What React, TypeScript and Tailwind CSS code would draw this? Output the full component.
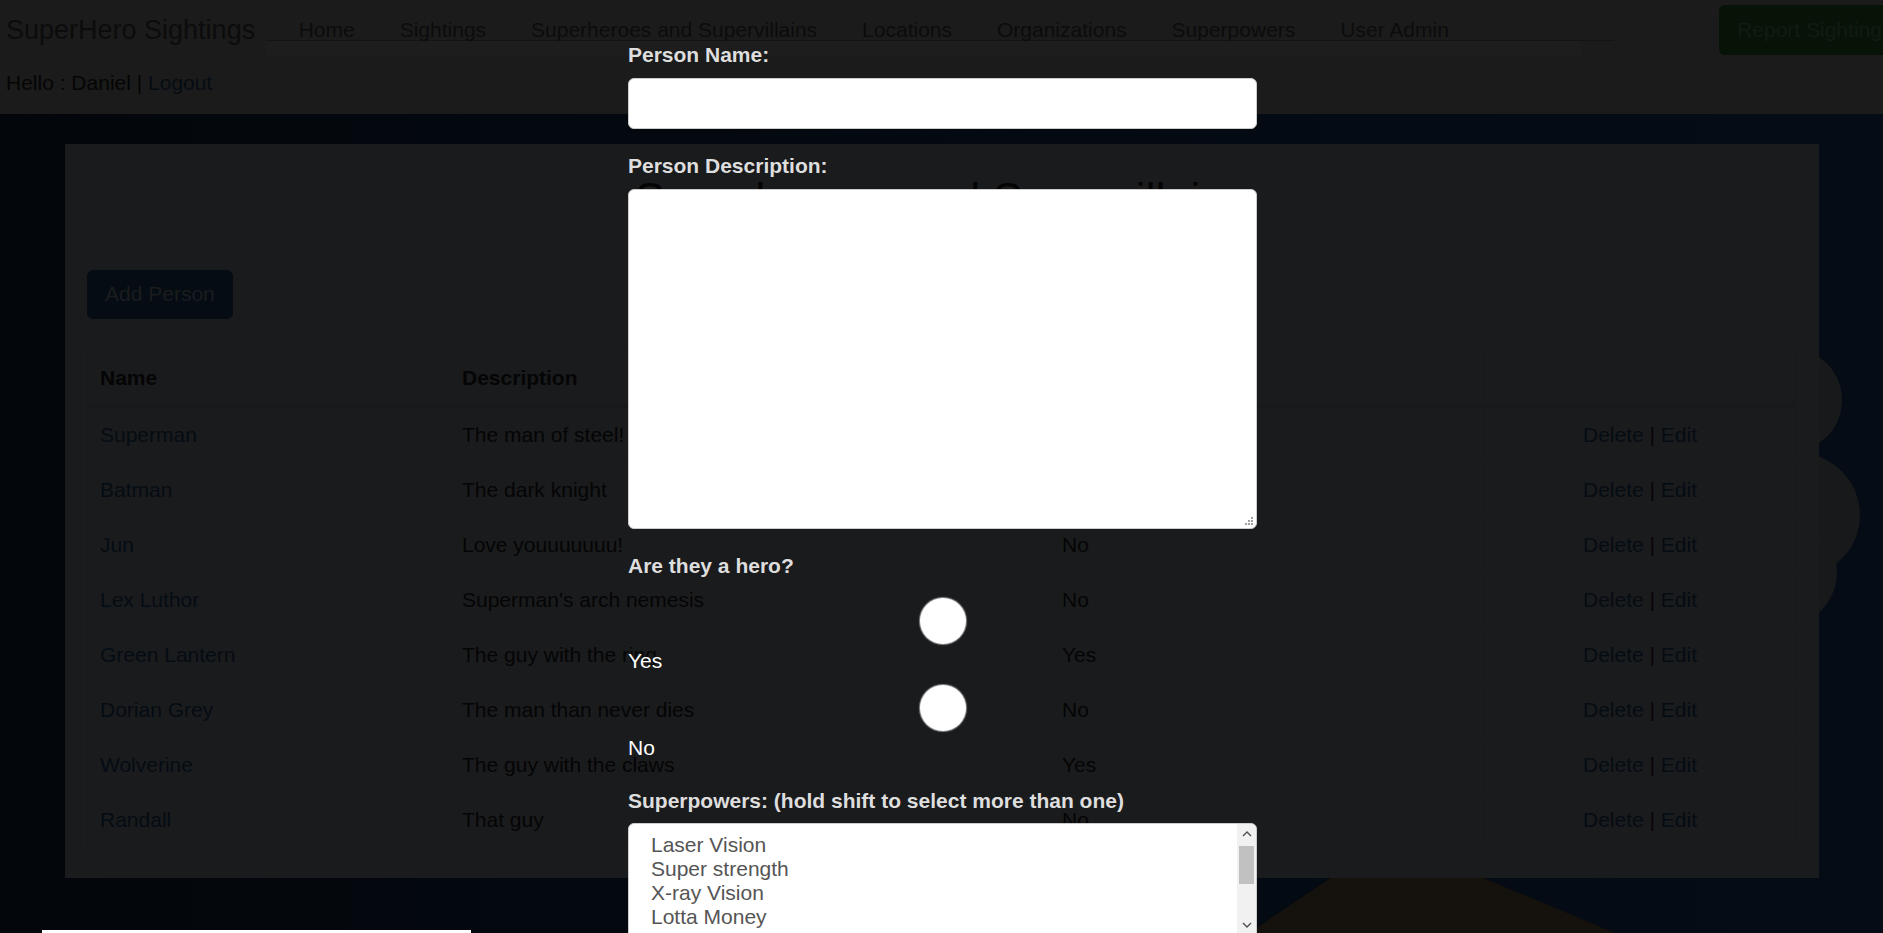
const navLinks = [
  "Home",
  "Sightings",
  "Superheroes and Supervillains",
  "Locations",
  "Organizations",
  "Superpowers",
  "User Admin",
];

const people = [
  { name: "Superman", description: "The man of steel!", hero: "Yes" },
  { name: "Batman", description: "The dark knight", hero: "Yes" },
  { name: "Jun", description: "Love youuuuuuu!", hero: "No" },
  { name: "Lex Luthor", description: "Superman's arch nemesis", hero: "No" },
  { name: "Green Lantern", description: "The guy with the ring", hero: "Yes" },
  { name: "Dorian Grey", description: "The man than never dies", hero: "No" },
  { name: "Wolverine", description: "The guy with the claws", hero: "Yes" },
  { name: "Randall", description: "That guy", hero: "No" },
];

const powers = ["Laser Vision", "Super strength", "X-ray Vision", "Lotta Money"];

function NightScene() {
  // the dimmed background picture behind the page
  return (
    <svg className="absolute inset-0 h-full w-full" viewBox="0 0 1883 933" preserveAspectRatio="none">
      <defs>
        <linearGradient id="sky" x1="0" y1="0" x2="1" y2="0">
          <stop offset="0" stopColor="#03070c" />
          <stop offset="1" stopColor="#050c16" />
        </linearGradient>
      </defs>
      <rect width="1883" height="933" fill="url(#sky)" />
      <g fill="#18191a">
        <circle cx="1790" cy="400" r="52" />
        <circle cx="1798" cy="515" r="62" />
        <circle cx="1782" cy="572" r="55" />
      </g>
      <polygon points="1357,860 1441,860 1615,933 1249,933" fill="#15110c" />
    </svg>
  );
}

function Header() {
  return (
    <header className="relative h-[114px] bg-[#1b1b1b]">
      <div className="flex h-[60px] items-start">
        <div className="ml-[6px] mt-[15px] text-[27px] leading-[30px] text-[#0c0c0c] whitespace-nowrap">
          SuperHero Sightings
        </div>
        <nav className="relative ml-[11px] h-[41px] w-[1348px] shrink-0 border-b border-[#141414]">
          <div className="absolute left-0 right-[33px] top-[41px] h-[15px] bg-[#1d1d1d]" />
          <ul className="flex pl-[10px] pt-[15px] leading-[30px] text-[#0c0c0c]">
            {navLinks.map((l) => (
              <li key={l} className="px-[22.5px] whitespace-nowrap">
                {l}
              </li>
            ))}
          </ul>
        </nav>
        <button className="ml-[105px] mt-[5px] h-[50px] shrink-0 rounded-[6px] bg-[#081308] px-[18px] text-[#131a13] whitespace-nowrap">
          Report Sighting
        </button>
      </div>
      <div className="ml-[6px] mt-[8px] text-[#050505]">
        Hello : Daniel | <span className="text-[#050c13]">Logout</span>
      </div>
    </header>
  );
}

function PeoplePanel() {
  const cell = "border border-[#18191b] px-[12px] py-[12px] align-top";
  return (
    <main className="relative mx-auto mt-[30px] w-[1754px] bg-[#1a1b1d] px-[22.5px] pb-[30px] pt-[30px]">
      <h2 className="text-center text-[45px] leading-[49.5px] text-[#040404]">Superheroes and Supervillains</h2>
      <button className="mt-[46px] h-[49px] rounded-[6px] bg-[#050c13] px-[18px] text-[#1b1c1e]">Add Person</button>
      <table className="mt-[31px] w-full table-fixed border-collapse text-[#050505]">
        <colgroup>
          <col className="w-[362px]" />
          <col className="w-[600px]" />
          <col className="w-[435px]" />
          <col />
        </colgroup>
        <thead>
          <tr>
            <th className={`${cell} border-b-[3px] text-left font-bold`}>Name</th>
            <th className={`${cell} border-b-[3px] text-left font-bold`}>Description</th>
            <th className={`${cell} border-b-[3px] text-left font-bold`}>Hero?</th>
            <th className={`${cell} border-b-[3px]`}></th>
          </tr>
        </thead>
        <tbody>
          {people.map((p) => (
            <tr key={p.name}>
              <td className={`${cell} text-left text-[#050c13]`}>{p.name}</td>
              <td className={`${cell} text-left`}>{p.description}</td>
              <td className={`${cell} text-left`}>{p.hero}</td>
              <td className={`${cell} text-center`}>
                <span className="text-[#050c13]">Delete</span> | <span className="text-[#050c13]">Edit</span>
              </td>
            </tr>
          ))}
        </tbody>
      </table>
    </main>
  );
}

function RadioDot({ top }: { top: string }) {
  return (
    <div className={`${top} flex h-[51px] items-center justify-center`}>
      <div className="h-[46px] w-[46px] rounded-full bg-white shadow-[0_0_1px_1px_rgba(255,255,255,0.5)]" />
    </div>
  );
}

function PersonForm() {
  const label = "mb-[7.5px] block font-bold text-[#dedede]";
  return (
    <form className="absolute left-[628px] top-[40px] w-[629px]">
      <div className="mb-[22.5px]">
        <label className={label}>Person Name:</label>
        <input className="block h-[51px] w-full rounded-[6px] border border-[#cccccc] bg-white px-[18px]" />
      </div>
      <div className="mb-[22.5px]">
        <label className={label}>Person Description:</label>
        <div className="relative">
          <textarea className="block h-[340px] w-full resize-none rounded-[6px] border border-[#cccccc] bg-white" />
          {/* resize grip */}
          <svg className="absolute bottom-[3px] right-[3px]" width="10" height="10" viewBox="0 0 10 10" fill="#a0a0a0">
            <rect x="7" y="1" width="2" height="2" />
            <rect x="4" y="4" width="2" height="2" />
            <rect x="7" y="4" width="2" height="2" />
            <rect x="1" y="7" width="2" height="2" />
            <rect x="4" y="7" width="2" height="2" />
            <rect x="7" y="7" width="2" height="2" />
          </svg>
        </div>
      </div>
      <div className="mb-[22.5px]">
        <label className={label}>Are they a hero?</label>
        <RadioDot top="mt-[14px]" />
        <div className="text-white">Yes</div>
        <RadioDot top="mt-[6px]" />
        <div className="text-white">No</div>
      </div>
      <div>
        <label className={label}>Superpowers: (hold shift to select more than one)</label>
        <div className="relative h-[120px] w-full overflow-hidden rounded-t-[6px] border border-[#cccccc] bg-white">
          <ul className="pl-[22px] pt-[9px] text-[#555555] leading-[24px]">
            {powers.map((p) => (
              <li key={p}>{p}</li>
            ))}
          </ul>
          <div className="absolute bottom-0 right-0 top-0 w-[19px] bg-[#f1f1f1]">
            <div className="flex h-[18px] items-center justify-center text-[#505050]">
              <svg width="10" height="7" viewBox="0 0 10 7">
                <path d="M1 6 L5 2 L9 6" fill="none" stroke="currentColor" strokeWidth="1.4" />
              </svg>
            </div>
            <div className="mx-[2px] mt-[4px] h-[38px] bg-[#c1c1c1]" />
            <div className="absolute bottom-[8px] left-0 right-0 flex h-[18px] items-center justify-center text-[#505050]">
              <svg width="10" height="7" viewBox="0 0 10 7">
                <path d="M1 1 L5 5 L9 1" fill="none" stroke="currentColor" strokeWidth="1.4" />
              </svg>
            </div>
          </div>
        </div>
      </div>
    </form>
  );
}

export default function App() {
  return (
    <div className="relative h-[933px] w-full overflow-hidden bg-[#03080e] font-['Liberation_Sans',Arial,sans-serif] text-[21px] leading-[30px]">
      <NightScene />
      <div className="relative">
        <Header />
        <PeoplePanel />
      </div>
      <div className="absolute bottom-0 left-[42px] h-[3px] w-[429px] bg-white" />
      <PersonForm />
    </div>
  );
}
